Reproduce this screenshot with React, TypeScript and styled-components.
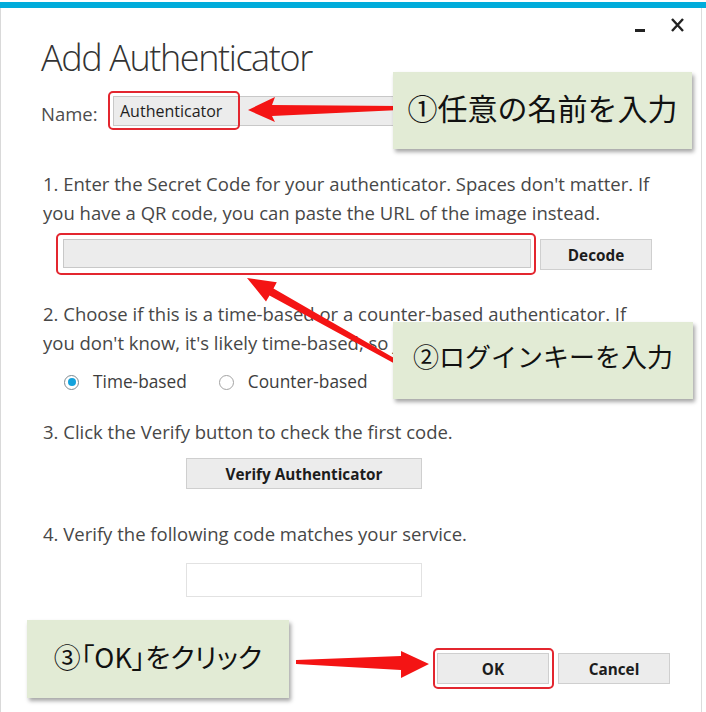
import React from "react";
import styled, { createGlobalStyle } from "styled-components";

const GlobalStyle = createGlobalStyle`
  html, body { margin: 0; padding: 0; background: #ffffff; }
  body { font-family: "Open Sans", "Liberation Sans", sans-serif; }
  * { box-sizing: border-box; }
`;

const Screen = styled.div`
  position: relative;
  width: 706px;
  height: 712px;
  overflow: hidden;
  background: #ffffff;
  display: flex;
  flex-direction: column;
`;

const AccentBar = styled.div`
  flex: none;
  margin-top: 2px;
  height: 6px;
  background: #01acdb;
`;

const Dialog = styled.div`
  flex: 1;
  width: 702px;
  border-left: 1px solid #d9d9d9;
  border-right: 1px solid #dcdcdc;
  padding-left: 40px;
  display: flex;
  flex-direction: column;
  align-items: flex-start;
`;

const WindowControls = styled.div`
  align-self: stretch;
  height: 28px;
  display: flex;
  justify-content: flex-end;
  gap: 26px;
  padding-right: 17px;
`;

const ControlIcon = styled.svg`
  display: block;
  flex: none;
`;

const Title = styled.h1`
  margin: 0;
  font-family: "Open Sans", sans-serif;
  font-weight: 300;
  font-size: 36px;
  line-height: 44px;
  letter-spacing: -1.4px;
  color: #333333;
`;

const NameRow = styled.div`
  display: flex;
  align-items: center;
  margin-top: 16px;
  height: 30px;
`;

const FieldLabel = styled.span`
  width: 72px;
  padding-top: 6px;
  font-size: 18.5px;
  line-height: 28.5px;
  color: #4d4d4d;
`;

const Marked = styled.div<{ $top: number; $left: number; $right: number; $bottom: number }>`
  position: relative;
  display: flex;
  &::after {
    content: "";
    position: absolute;
    top: ${(p) => -p.$top}px;
    left: ${(p) => -p.$left}px;
    right: ${(p) => -p.$right}px;
    bottom: ${(p) => -p.$bottom}px;
    border: 2px solid #e3262f;
    border-radius: 5px;
    pointer-events: none;
  }
`;

const TextField = styled.div<{ $w: number; $h: number }>`
  width: ${(p) => p.$w}px;
  height: ${(p) => p.$h}px;
  border: 1px solid #c8c8c8;
  background: #ececec;
  padding-left: 6px;
  display: flex;
  align-items: center;
  font-size: 16px;
  font-weight: 500;
  color: #1e1e1e;
`;

const NameMark = styled.div`
  position: absolute;
  left: -5px;
  top: -5px;
  width: 132px;
  height: 39px;
  border: 2px solid #e3262f;
  border-radius: 5px;
  pointer-events: none;
`;

const NameField = styled.div`
  position: relative;
`;

const Step = styled.p<{ $mt: number }>`
  margin: ${(p) => p.$mt}px 0 0 2px;
  font-size: 18.5px;
  line-height: 28.5px;
  color: #474747;
  white-space: nowrap;
`;

const SecretRow = styled.div`
  display: flex;
  align-items: flex-start;
  gap: 9px;
  margin-top: 12px;
  margin-left: 22px;
`;

const Button = styled.button<{ $w: number }>`
  width: ${(p) => p.$w}px;
  height: 31px;
  padding: 0;
  border: 1px solid #cfcfcf;
  border-radius: 0;
  background: #ececec;
  font-family: "Open Sans", sans-serif;
  font-size: 15.3px;
  font-weight: 700;
  color: #1c1c1c;
`;

const RadioRow = styled.div`
  display: flex;
  align-items: center;
  height: 28.5px;
  margin-top: 11px;
  margin-left: 23px;
  gap: 32px;
`;

const RadioOption = styled.label`
  display: flex;
  align-items: center;
  gap: 14px;
  font-size: 17.3px;
  line-height: 28.5px;
  color: #3d3d3d;
`;

const RadioCircle = styled.span<{ $checked?: boolean }>`
  width: 15px;
  height: 15px;
  border-radius: 50%;
  border: 1.5px solid ${(p) => (p.$checked ? "#7d8a91" : "#a3a3a3")};
  background: #ffffff;
  display: flex;
  align-items: center;
  justify-content: center;
  &::after {
    content: "";
    width: 8px;
    height: 8px;
    border-radius: 50%;
    background: ${(p) => (p.$checked ? "#13a2dc" : "transparent")};
  }
`;

const Indented = styled.div<{ $mt: number }>`
  margin-top: ${(p) => p.$mt}px;
  margin-left: 145px;
`;

const CodeBox = styled.div`
  width: 236px;
  height: 34px;
  border: 1px solid #e2e2e2;
  background: #ffffff;
`;

const Footer = styled.div`
  display: flex;
  gap: 9px;
  margin-top: 56px;
  margin-left: 396px;
`;

const Annotations = styled.svg`
  position: absolute;
  left: 0;
  top: 0;
  pointer-events: none;
`;

const Callout = styled.div<{ $x: number; $y: number; $w: number; $h: number; $size: number; $shift: number; $palt?: boolean }>`
  position: absolute;
  left: ${(p) => p.$x}px;
  top: ${(p) => p.$y}px;
  width: ${(p) => p.$w}px;
  height: ${(p) => p.$h}px;
  background: #e2ebd5;
  box-shadow: 2px 3px 4px rgba(0, 0, 0, 0.35);
  display: flex;
  align-items: center;
  justify-content: center;
  padding-bottom: ${(p) => p.$shift}px;
  font-family: "Noto Sans CJK JP", sans-serif;
  font-size: ${(p) => p.$size}px;
  font-feature-settings: ${(p) => (p.$palt ? '"palt"' : "normal")};
  color: #111111;
  white-space: nowrap;
`;

const RED = "#f41414";

export default function App() {
  return (
    <>
      <GlobalStyle />
      <Screen>
        <AccentBar />
        <Dialog>
          <WindowControls>
            <ControlIcon width="10" height="28" viewBox="0 0 10 28">
              <rect x="0" y="21" width="10" height="3" fill="#222" />
            </ControlIcon>
            <ControlIcon width="13" height="28" viewBox="0 0 13 28">
              <path d="M1 11 L12 23 M12 11 L1 23" stroke="#222" strokeWidth="2.4" fill="none" />
            </ControlIcon>
          </WindowControls>
          <Title>Add Authenticator</Title>
          <NameRow>
            <FieldLabel>Name:</FieldLabel>
            <NameField>
              <TextField $w={539} $h={30}>Authenticator</TextField>
              <NameMark />
            </NameField>
          </NameRow>
          <Step $mt={44}>
            1. Enter the Secret Code for your authenticator. Spaces don't matter. If
            <br />
            you have a QR code, you can paste the URL of the image instead.
          </Step>
          <SecretRow>
            <Marked $top={6} $left={7} $right={5} $bottom={7}>
              <TextField $w={468} $h={29} />
            </Marked>
            <Button $w={112}>Decode</Button>
          </SecretRow>
          <Step $mt={30}>
            2. Choose if this is a time-based or a counter-based authenticator. If
            <br />
            you don't know, it's likely time-based, so just leave the default choice.
          </Step>
          <RadioRow>
            <RadioOption>
              <RadioCircle $checked />
              Time-based
            </RadioOption>
            <RadioOption>
              <RadioCircle />
              Counter-based
            </RadioOption>
          </RadioRow>
          <Step $mt={21.5}>3. Click the Verify button to check the first code.</Step>
          <Indented $mt={11.5}>
            <Button $w={236}>Verify Authenticator</Button>
          </Indented>
          <Step $mt={31}>4. Verify the following code matches your service.</Step>
          <Indented $mt={14.5}>
            <CodeBox />
          </Indented>
          <Footer>
            <Marked $top={5} $left={4} $right={5} $bottom={5}>
              <Button $w={112}>OK</Button>
            </Marked>
            <Button $w={112}>Cancel</Button>
          </Footer>
        </Dialog>

        <Annotations width="706" height="712" viewBox="0 0 706 712">
          <polygon
            points="248,110 275,97 272,105 400,106 400,110 272,116 275,122"
            fill={RED}
          />
          <polygon
            points="247,278 276.8,282.2 273.5,288.5 401,362 399,366 269.5,295.5 266,301.4"
            fill={RED}
          />
          <polygon
            points="429,664 401,651 401,656 296,660 296,664 401,670 401,678"
            fill={RED}
          />
        </Annotations>

        <Callout $x={393} $y={72} $w={299} $h={77} $size={30} $shift={8}>
          ①任意の名前を入力
        </Callout>
        <Callout $x={393} $y={322} $w={300} $h={77} $size={26} $shift={10}>
          ②ログインキーを入力
        </Callout>
        <Callout $x={27} $y={620} $w={262} $h={78} $size={27} $shift={6} $palt>
          ③「OK」をクリック
        </Callout>
      </Screen>
    </>
  );
}
